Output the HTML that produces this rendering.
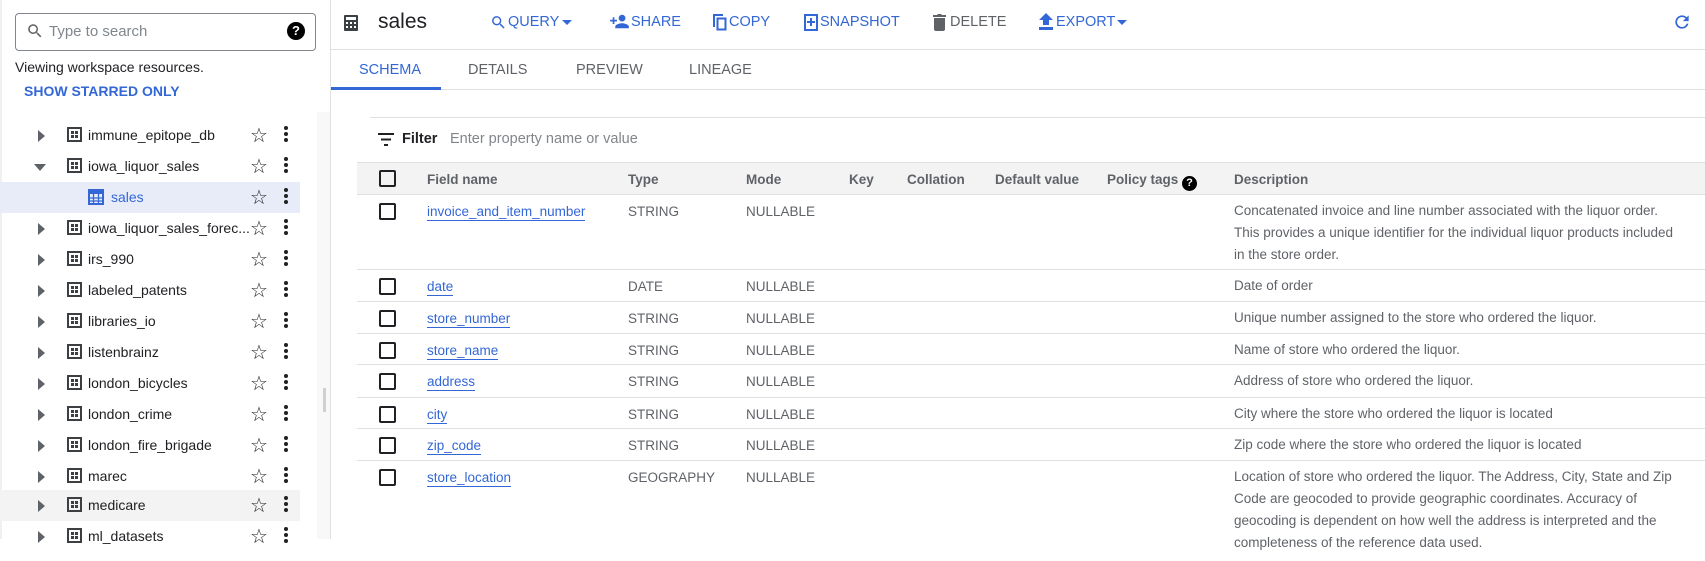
<!DOCTYPE html>
<html><head><meta charset="utf-8"><style>
*{box-sizing:border-box;margin:0;padding:0}
body{width:1705px;height:539px;overflow:hidden;background:#fff;font-family:"Liberation Sans",Arial,sans-serif;color:#3c4043;position:relative}
.a{position:absolute;white-space:nowrap}
.tb{font-size:14.5px;color:#3367d6;top:14px}
.tree{position:absolute;left:0;width:300px;height:31px}
.tree .arr{position:absolute;left:38px;top:10px;width:0;height:0;border-top:6px solid transparent;border-bottom:6px solid transparent;border-left:7px solid #5f6368}
.tree .db{position:absolute;left:67px;top:7px;width:15px;height:15px;border:2px solid #3c4043}
.tree .db:before{content:"";position:absolute;left:2px;top:2px;width:3px;height:3px;background:#3c4043;box-shadow:4px 0 #3c4043,0 4px #3c4043,4px 4px #3c4043}
.tree .t{position:absolute;left:88px;top:7px;font-size:14px;color:#202124}
.tree .st{position:absolute;left:250px;top:3px;font-size:20px;color:#202124}
.tree .dt{position:absolute;left:284px;top:6px;width:4px;height:4px;border-radius:50%;background:#202124;box-shadow:0 6px #202124,0 12px #202124}
.row{position:absolute;left:357px;right:0;border-bottom:1px solid #e0e0e0;font-size:13.5px}
.cb{position:absolute;left:22px;width:17px;height:17px;border:2px solid #202124;border-radius:2px}
.c{position:absolute;top:9px}
.fn{left:70px;color:#3367d6;border-bottom:1px solid #3367d6;padding-bottom:1px}
.ty{left:271px;color:#5f6368}
.md{left:389px;color:#5f6368}
.ds{left:877px;color:#5f6368;line-height:22px;top:5px;white-space:normal;width:440px}
.hd{position:absolute;top:9px;font-size:13.5px;font-weight:bold;color:#5f6368}
.tab{position:absolute;top:62px;font-size:14.5px;color:#5f6368}
</style></head><body>
<div class="a" style="left:0;top:0;width:2px;height:539px;background:#f0f0f0"></div>
<div class="a" style="left:15px;top:13px;width:301px;height:38px;border:1px solid #80868b;border-radius:4px"></div>
<svg class="a" style="left:26px;top:22px" width="18" height="18" viewBox="0 0 24 24"><path fill="#5f6368" d="M15.5 14h-.8l-.3-.3A6.5 6.5 0 1 0 9.5 16a6.5 6.5 0 0 0 4.2-1.6l.3.3v.8l5 5 1.5-1.5-5-5zm-6 0A4.5 4.5 0 1 1 14 9.5 4.5 4.5 0 0 1 9.5 14z"/></svg>
<div class="a" style="left:49px;top:23px;font-size:15px;color:#80868b">Type to search</div>
<div class="a" style="left:287px;top:22px;width:18px;height:18px;border-radius:50%;background:#000;color:#fff;font-size:13px;font-weight:bold;text-align:center;line-height:18px">?</div>
<div class="a" style="left:15px;top:59px;font-size:14px;color:#202124">Viewing workspace resources.</div>
<div class="a" style="left:24px;top:83px;font-size:14px;font-weight:bold;color:#3367d6">SHOW STARRED ONLY</div>
<div class="a" style="left:317px;top:112px;width:13px;height:427px;background:#f8f8f8"></div>
<div class="a" style="left:323px;top:388px;width:3px;height:24px;background:#d0d0d0"></div>
<div class="a" style="left:330px;top:0;width:1px;height:539px;background:#e0e0e0"></div>

<div class="tree" style="top:120px"><div class="arr"></div><div class="db"></div><div class="t">immune_epitope_db</div><div class="st">☆</div><div class="dt"></div></div>
<div class="tree" style="top:151px"><div class="arr" style="left:34px;top:13px;border-left:6px solid transparent;border-right:6px solid transparent;border-top:7px solid #5f6368;border-bottom:0"></div><div class="db"></div><div class="t">iowa_liquor_sales</div><div class="st">☆</div><div class="dt"></div></div>
<div class="tree" style="top:182px;background:#e8ecf9"><svg style="position:absolute;left:88px;top:7px" width="16" height="16" viewBox="0 0 16 16"><rect x="1" y="1" width="14" height="14" fill="none" stroke="#3367d6" stroke-width="2"/><rect x="1" y="1" width="14" height="4" fill="#3367d6"/><path d="M1 9h14M1 12h14M5.5 5v10M10.5 5v10" stroke="#3367d6" stroke-width="1.3"/></svg><div class="t" style="left:111px;color:#3367d6">sales</div><div class="st">☆</div><div class="dt"></div></div>
<div class="tree" style="top:213px"><div class="arr"></div><div class="db"></div><div class="t">iowa_liquor_sales_forec...</div><div class="st">☆</div><div class="dt"></div></div>
<div class="tree" style="top:244px"><div class="arr"></div><div class="db"></div><div class="t">irs_990</div><div class="st">☆</div><div class="dt"></div></div>
<div class="tree" style="top:275px"><div class="arr"></div><div class="db"></div><div class="t">labeled_patents</div><div class="st">☆</div><div class="dt"></div></div>
<div class="tree" style="top:306px"><div class="arr"></div><div class="db"></div><div class="t">libraries_io</div><div class="st">☆</div><div class="dt"></div></div>
<div class="tree" style="top:337px"><div class="arr"></div><div class="db"></div><div class="t">listenbrainz</div><div class="st">☆</div><div class="dt"></div></div>
<div class="tree" style="top:368px"><div class="arr"></div><div class="db"></div><div class="t">london_bicycles</div><div class="st">☆</div><div class="dt"></div></div>
<div class="tree" style="top:399px"><div class="arr"></div><div class="db"></div><div class="t">london_crime</div><div class="st">☆</div><div class="dt"></div></div>
<div class="tree" style="top:430px"><div class="arr"></div><div class="db"></div><div class="t">london_fire_brigade</div><div class="st">☆</div><div class="dt"></div></div>
<div class="tree" style="top:461px"><div class="arr"></div><div class="db"></div><div class="t">marec</div><div class="st">☆</div><div class="dt"></div></div>
<div class="tree" style="top:490px;background:#f3f3f3"><div class="arr"></div><div class="db"></div><div class="t">medicare</div><div class="st">☆</div><div class="dt"></div></div>
<div class="tree" style="top:521px"><div class="arr"></div><div class="db"></div><div class="t">ml_datasets</div><div class="st">☆</div><div class="dt"></div></div>

<svg class="a" style="left:342px;top:14px" width="18" height="18" viewBox="0 0 18 18"><rect x="2" y="1" width="14" height="16" rx="1" fill="#3c4043"/><rect x="4" y="3" width="10" height="3" fill="#fff"/><g fill="#fff"><rect x="4" y="8" width="2" height="2"/><rect x="8" y="8" width="2" height="2"/><rect x="12" y="8" width="2" height="2"/><rect x="4" y="12" width="2" height="2"/><rect x="8" y="12" width="2" height="2"/><rect x="12" y="12" width="2" height="2"/></g></svg>
<div class="a" style="left:378px;top:10px;font-size:21px;color:#202124">sales</div>
<svg class="a" style="left:490px;top:14px" width="17" height="17" viewBox="0 0 24 24"><path fill="#3367d6" d="M15.5 14h-.8l-.3-.3A6.5 6.5 0 1 0 9.5 16a6.5 6.5 0 0 0 4.2-1.6l.3.3v.8l5 5 1.5-1.5-5-5zm-6 0A4.5 4.5 0 1 1 14 9.5 4.5 4.5 0 0 1 9.5 14z"/></svg>
<div class="a tb" style="left:508px">QUERY</div>
<div class="a" style="left:562px;top:20px;border-left:5px solid transparent;border-right:5px solid transparent;border-top:5px solid #3367d6"></div>
<svg class="a" style="left:609px;top:13px" width="21" height="17" viewBox="0 0 24 20"><path fill="#3367d6" d="M15 10a4 4 0 1 0 0-8 4 4 0 0 0 0 8zM6 8V5H4v3H1v2h3v3h2v-3h3V8zm9 4c-2.7 0-8 1.3-8 4v2h16v-2c0-2.7-5.3-4-8-4z"/></svg>
<div class="a tb" style="left:631px">SHARE</div>
<svg class="a" style="left:713px;top:14px" width="14" height="17" viewBox="0 0 14 17"><path fill="none" stroke="#3367d6" stroke-width="2" d="M1 13V1h9"/><rect x="4.5" y="4.5" width="8" height="11" fill="none" stroke="#3367d6" stroke-width="2"/></svg>
<div class="a tb" style="left:729px">COPY</div>
<svg class="a" style="left:804px;top:14px" width="14" height="17" viewBox="0 0 14 17"><rect x="1" y="1" width="12" height="15" fill="none" stroke="#3367d6" stroke-width="2"/><path d="M7 4v8M3 8h8" stroke="#3367d6" stroke-width="2"/></svg>
<div class="a tb" style="left:820px">SNAPSHOT</div>
<svg class="a" style="left:933px;top:14px" width="13" height="17" viewBox="0 0 13 17"><path fill="#5f6368" d="M1 4h11v11a2 2 0 0 1-2 2H3a2 2 0 0 1-2-2zM0 1h4l1-1h3l1 1h4v2H0z"/></svg>
<div class="a tb" style="left:950px;color:#5f6368">DELETE</div>
<svg class="a" style="left:1038px;top:13px" width="16" height="18" viewBox="0 0 16 18"><path fill="#3367d6" d="M5 12h6V7h4L8 0 1 7h4zM1 14h14v3H1z"/></svg>
<div class="a tb" style="left:1056px">EXPORT</div>
<div class="a" style="left:1117px;top:20px;border-left:5px solid transparent;border-right:5px solid transparent;border-top:5px solid #3367d6"></div>
<svg class="a" style="left:1672px;top:12px" width="20" height="20" viewBox="0 0 24 24"><path fill="#3367d6" d="M17.65 6.35A7.96 7.96 0 0 0 12 4a8 8 0 1 0 7.73 10h-2.08A6 6 0 1 1 12 6c1.66 0 3.14.69 4.22 1.78L13 11h7V4z"/></svg>
<div class="a" style="left:331px;top:49px;right:0;height:1px;background:#e0e0e0"></div>

<div class="tab" style="left:359px;color:#3367d6">SCHEMA</div>
<div class="tab" style="left:468px">DETAILS</div>
<div class="tab" style="left:576px">PREVIEW</div>
<div class="tab" style="left:689px">LINEAGE</div>
<div class="a" style="left:331px;top:89px;right:0;height:1px;background:#e0e0e0"></div>
<div class="a" style="left:331px;top:87px;width:110px;height:3px;background:#3367d6"></div>
<div class="a" style="left:370px;top:117px;right:0;height:1px;background:#e0e0e0"></div>

<svg class="a" style="left:378px;top:133px" width="16" height="13" viewBox="0 0 16 13"><path d="M0 1h16M3 6.5h10M6 12h4" stroke="#202124" stroke-width="2"/></svg>
<div class="a" style="left:402px;top:131px;font-size:14.5px;font-weight:bold;color:#202124">Filter</div>
<div class="a" style="left:450px;top:131px;font-size:14.5px;color:#80868b">Enter property name or value</div>

<div class="row" style="top:162px;height:33px;background:#f3f3f3;border-top:1px solid #e0e0e0">
<div class="cb" style="top:7px"></div>
<div class="hd" style="left:70px">Field name</div>
<div class="hd" style="left:271px">Type</div>
<div class="hd" style="left:389px">Mode</div>
<div class="hd" style="left:492px">Key</div>
<div class="hd" style="left:550px">Collation</div>
<div class="hd" style="left:638px">Default value</div>
<div class="hd" style="left:750px">Policy tags <span style="display:inline-block;width:15px;height:15px;border-radius:50%;background:#000;color:#fff;font-size:11px;text-align:center;line-height:15px;vertical-align:-2px">?</span></div>
<div class="hd" style="left:877px">Description</div>
</div>

<div class="row" style="top:195px;height:75px"><div class="cb" style="top:8px"></div><div class="c fn">invoice_and_item_number</div><div class="c ty">STRING</div><div class="c md">NULLABLE</div><div class="c ds">Concatenated invoice and line number associated with the liquor order. This provides a unique identifier for the individual liquor products included in the store order.</div></div>
<div class="row" style="top:270px;height:32px"><div class="cb" style="top:8px"></div><div class="c fn">date</div><div class="c ty">DATE</div><div class="c md">NULLABLE</div><div class="c ds">Date of order</div></div>
<div class="row" style="top:302px;height:32px"><div class="cb" style="top:8px"></div><div class="c fn">store_number</div><div class="c ty">STRING</div><div class="c md">NULLABLE</div><div class="c ds">Unique number assigned to the store who ordered the liquor.</div></div>
<div class="row" style="top:334px;height:31px"><div class="cb" style="top:8px"></div><div class="c fn">store_name</div><div class="c ty">STRING</div><div class="c md">NULLABLE</div><div class="c ds">Name of store who ordered the liquor.</div></div>
<div class="row" style="top:365px;height:33px"><div class="cb" style="top:8px"></div><div class="c fn">address</div><div class="c ty">STRING</div><div class="c md">NULLABLE</div><div class="c ds">Address of store who ordered the liquor.</div></div>
<div class="row" style="top:398px;height:31px"><div class="cb" style="top:8px"></div><div class="c fn">city</div><div class="c ty">STRING</div><div class="c md">NULLABLE</div><div class="c ds">City where the store who ordered the liquor is located</div></div>
<div class="row" style="top:429px;height:32px"><div class="cb" style="top:8px"></div><div class="c fn">zip_code</div><div class="c ty">STRING</div><div class="c md">NULLABLE</div><div class="c ds">Zip code where the store who ordered the liquor is located</div></div>
<div class="row" style="top:461px;height:100px;border:0"><div class="cb" style="top:8px"></div><div class="c fn">store_location</div><div class="c ty">GEOGRAPHY</div><div class="c md">NULLABLE</div><div class="c ds">Location of store who ordered the liquor. The Address, City, State and Zip Code are geocoded to provide geographic coordinates. Accuracy of geocoding is dependent on how well the address is interpreted and the completeness of the reference data used.</div></div>
</body></html>
